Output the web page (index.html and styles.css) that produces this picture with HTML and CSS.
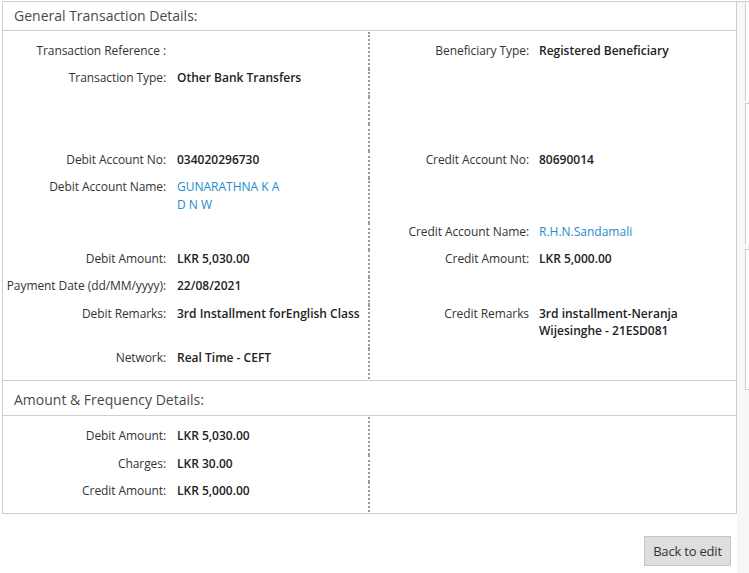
FILE: index.html
```html
<!DOCTYPE html>
<html lang="en">
<head>
<meta charset="utf-8">
<title>Transaction Details</title>
<link rel="stylesheet" href="styles.css">
</head>
<body>
<div class="page">
  <main class="main">
    <section class="panel">
      <div class="panel-head">General Transaction Details:</div>
      <div class="panel-body">
        <div class="row first">
          <div class="cell left"><span class="lbl">Transaction Reference :</span><span class="val"></span></div>
          <div class="cell right"><span class="lbl">Beneficiary Type:</span><span class="val">Registered Beneficiary</span></div>
        </div>
        <div class="row">
          <div class="cell left"><span class="lbl">Transaction Type:</span><span class="val">Other Bank Transfers</span></div>
          <div class="cell right"></div>
        </div>
        <div class="row">
          <div class="cell left"><span class="lbl">&nbsp;</span></div>
          <div class="cell right"></div>
        </div>
        <div class="row">
          <div class="cell left"><span class="lbl">&nbsp;</span></div>
          <div class="cell right"></div>
        </div>
        <div class="row">
          <div class="cell left"><span class="lbl">Debit Account No:</span><span class="val">034020296730</span></div>
          <div class="cell right"><span class="lbl">Credit Account No:</span><span class="val">80690014</span></div>
        </div>
        <div class="row">
          <div class="cell left"><span class="lbl">Debit Account Name:</span><span class="val link name">GUNARATHNA K A D N W</span></div>
          <div class="cell right"></div>
        </div>
        <div class="row">
          <div class="cell left"><span class="lbl">&nbsp;</span></div>
          <div class="cell right"><span class="lbl">Credit Account Name:</span><span class="val link">R.H.N.Sandamali</span></div>
        </div>
        <div class="row">
          <div class="cell left"><span class="lbl">Debit Amount:</span><span class="val">LKR 5,030.00</span></div>
          <div class="cell right"><span class="lbl">Credit Amount:</span><span class="val">LKR 5,000.00</span></div>
        </div>
        <div class="row">
          <div class="cell left"><span class="lbl">Payment Date (dd/MM/yyyy):</span><span class="val">22/08/2021</span></div>
          <div class="cell right"></div>
        </div>
        <div class="row">
          <div class="cell left"><span class="lbl">Debit Remarks:</span><span class="val">3rd Installment forEnglish Class</span></div>
          <div class="cell right"><span class="lbl">Credit Remarks</span><span class="val">3rd installment-Neranja Wijesinghe - 21ESD081</span></div>
        </div>
        <div class="row last">
          <div class="cell left"><span class="lbl">Network:</span><span class="val">Real Time - CEFT</span></div>
          <div class="cell right"></div>
        </div>
      </div>
      <div class="panel-head second">Amount &amp; Frequency Details:</div>
      <div class="panel-body">
        <div class="row first">
          <div class="cell left"><span class="lbl">Debit Amount:</span><span class="val">LKR 5,030.00</span></div>
          <div class="cell right"></div>
        </div>
        <div class="row">
          <div class="cell left"><span class="lbl">Charges:</span><span class="val">LKR 30.00</span></div>
          <div class="cell right"></div>
        </div>
        <div class="row last">
          <div class="cell left"><span class="lbl">Credit Amount:</span><span class="val">LKR 5,000.00</span></div>
          <div class="cell right"></div>
        </div>
      </div>
    </section>
    <div class="actions">
      <button class="btn" type="button">Back to edit</button>
    </div>
  </main>
  <aside class="side">
    <div class="side-card c1"></div>
    <div class="side-card c2"></div>
    <div class="side-card c3"></div>
  </aside>
</div>
</body>
</html>
```

FILE: styles.css
```css
html, body {
  margin: 0;
  padding: 0;
  background: #fff;
}

body {
  font-family: "Open Sans", "Liberation Sans", sans-serif;
  font-size: 12px;
  color: #333;
}

.page {
  display: flex;
  padding-top: 1px;
  min-height: 572px;
}

.main {
  width: 735px;
  flex: none;
  padding-left: 2px;
}

.panel {
  border: 1px solid #cfcfcf;
}

.panel-head {
  height: 28px;
  line-height: 28px;
  padding-left: 11px;
  font-size: 14px;
  color: #4a4a4a;
  border-bottom: 1px solid #cfcfcf;
}

.panel-head.second {
  border-top: 1px solid #cfcfcf;
  height: 30px;
  line-height: 30px;
  padding-top: 4px;
}

.panel-body {
  padding: 1px 0;
}

.row {
  display: flex;
}

.cell {
  display: flex;
  align-items: flex-start;
  line-height: 17.25px;
  padding-bottom: 10px;
}

.first .cell {
  padding-top: 10px;
}

.last .cell {
  padding-bottom: 13px;
}

.cell.left {
  width: 365px;
  flex: none;
  border-right: 2px dotted #9a9a9a;
}

.cell.right {
  flex: 1;
}

.lbl {
  flex: none;
  text-align: right;
  color: #333;
  letter-spacing: -0.08px;
}

.left .lbl {
  width: 163px;
}

.right .lbl {
  width: 159px;
}

.val {
  font-weight: 600;
  color: #222;
  margin-left: 11px;
}

.right .val {
  margin-left: 10px;
}

.val.link {
  font-weight: 400;
  color: #238bd0;
}

.val.name {
  max-width: 108px;
}

.actions {
  display: flex;
  justify-content: flex-end;
  padding: 22px 6px 0 0;
}

.btn {
  height: 30px;
  width: 87px;
  padding: 0;
  font-family: "Open Sans", "Liberation Sans", sans-serif;
  font-size: 13px;
  letter-spacing: -0.2px;
  color: #333;
  background: #dedede;
  border: 1px solid #c6c6c6;
  border-radius: 0;
}

.side {
  flex: 1;
  background: #f7f7f7;
  border-top: 1px solid #cfcfcf;
  padding-left: 8px;
  overflow: hidden;
}

.side-card {
  width: 60px;
  background: #fff;
  border-left: 1px solid #cfcfcf;
}

.side-card.c1 {
  height: 99px;
}

.side-card.c2 {
  margin-top: 2px;
  border-top: 1px solid #cfcfcf;
  height: 140px;
}

.side-card.c3 {
  margin-top: 5px;
  border: 1px solid #cfcfcf;
  height: 139px;
}
```
